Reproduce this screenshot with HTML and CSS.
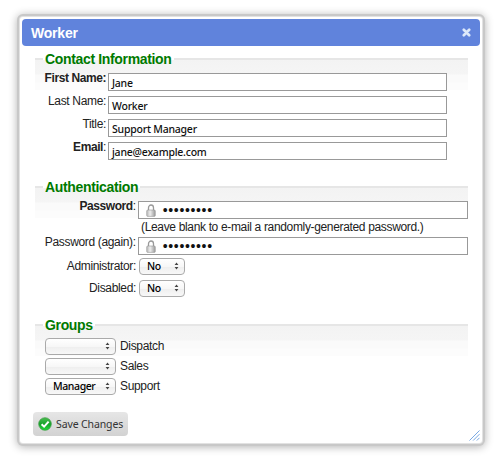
FILE: index.html
```html
<!DOCTYPE html>
<html lang="en">
<head>
<meta charset="utf-8">
<title>Worker</title>
<link rel="stylesheet" href="styles.css">
</head>
<body>
<svg class="defs" width="0" height="0" aria-hidden="true">
  <defs>
    <linearGradient id="metal" x1="0" x2="1" y1="0" y2="0"><stop offset="0" stop-color="#b5b5b5"/><stop offset=".4" stop-color="#eee"/><stop offset="1" stop-color="#999"/></linearGradient>
    <linearGradient id="green" x1="0" x2="0" y1="0" y2="1"><stop offset="0" stop-color="#4bbd50"/><stop offset=".5" stop-color="#16a32a"/><stop offset="1" stop-color="#20d838"/></linearGradient>
    <symbol id="lock" viewBox="0 0 10 13"><path d="M2.5 6.5V3.8a2.5 2.8 0 0 1 5 0v2.7" fill="none" stroke="#999" stroke-width="1.3"/><rect x=".7" y="6" width="8.6" height="6.4" rx="1" fill="url(#metal)" stroke="#999" stroke-width=".6"/></symbol>
    <symbol id="arrows" viewBox="0 0 5 8"><path d="M2.5 .4 4.4 3H.6zM2.5 7.6 .6 5h3.8z" fill="#444"/></symbol>
  </defs>
</svg>
<main class="dialog">
  <header class="titlebar">
    <h1>Worker</h1>
    <svg class="close" viewBox="0 0 9 9"><path d="M1.8 1.8l5.4 5.4M7.2 1.8L1.8 7.2" stroke="#dce8fa" stroke-width="2.7" stroke-linecap="round"/></svg>
  </header>
  <fieldset class="contact">
    <legend>Contact Information</legend>
    <div class="row"><label><b>First Name:</b></label><div class="input">Jane</div></div>
    <div class="row"><label>Last Name:</label><div class="input">Worker</div></div>
    <div class="row"><label>Title:</label><div class="input">Support Manager</div></div>
    <div class="row"><label><b>Email</b>:</label><div class="input">jane@example.com</div></div>
  </fieldset>
  <fieldset class="auth">
    <legend>Authentication</legend>
    <div class="row"><label><b>Password</b>:</label><div class="input secret"><svg class="lock"><use href="#lock"/></svg><span class="dots">•••••••••</span></div></div>
    <p class="hint">(Leave blank to e-mail a randomly-generated password.)</p>
    <div class="row"><label>Password (again):</label><div class="input secret"><svg class="lock"><use href="#lock"/></svg><span class="dots">•••••••••</span></div></div>
    <div class="row choice"><label>Administrator:</label><div class="select"><span>No</span><svg class="arrows"><use href="#arrows"/></svg></div></div>
    <div class="row choice"><label>Disabled:</label><div class="select"><span>No</span><svg class="arrows"><use href="#arrows"/></svg></div></div>
  </fieldset>
  <fieldset class="groups">
    <legend>Groups</legend>
    <div class="group"><div class="select"><span></span><svg class="arrows"><use href="#arrows"/></svg></div><label>Dispatch</label></div>
    <div class="group"><div class="select"><span></span><svg class="arrows"><use href="#arrows"/></svg></div><label>Sales</label></div>
    <div class="group"><div class="select"><span>Manager</span><svg class="arrows"><use href="#arrows"/></svg></div><label>Support</label></div>
  </fieldset>
  <button class="save" type="button">
    <svg class="check" viewBox="0 0 14 14"><circle cx="7" cy="7" r="6.3" fill="url(#green)" stroke="#3c9a42" stroke-width=".7"/><path d="M3.6 7.2l2.5 2.4 4.5-5" fill="none" stroke="#fff" stroke-width="2"/></svg>
    <span>Save Changes</span>
  </button>
  <svg class="resize" viewBox="0 0 12 12"><path d="M.5 11.5l11-11M4.5 11.5l7-7M8.5 11.5l3-3" stroke="#6ba0e0" stroke-width="1"/></svg>
</main>
</body>
</html>
```

FILE: styles.css
```css
* { box-sizing: border-box; }
body {
  margin: 0;
  width: 500px;
  height: 461px;
  overflow: hidden;
  background: #fff;
  font: 12px/14px "Liberation Sans", Arial, sans-serif;
  letter-spacing: -.34px;
  color: #222;
  display: flow-root;
}
.defs { position: absolute; }
.dialog {
  position: relative;
  margin: 17px 0 0 20px;
  width: 462px;
  height: 426px;
  padding: 2px;
  background: #fff;
  border-radius: 3px;
  box-shadow: 0 0 0 1px #e2e2e2, 0 0 0 3px #c8c8c8, 0 1px 8px 3px rgba(0, 0, 0, .3);
}
.titlebar {
  display: flex;
  align-items: center;
  justify-content: space-between;
  height: 27px;
  padding: 0 9px;
  border-radius: 4px;
  background: #6083dc;
}
h1 { margin: 1px 0 0; font-size: 14px; line-height: 18px; letter-spacing: -.2px; color: #fff; }
.close { width: 9px; height: 9px; }
fieldset {
  margin: 0 0 0 13px;
  padding: 0;
  width: 433px;
  min-width: 0;
  border: 0;
  border-top: 2px solid #e6e6e6;
  background: linear-gradient(#f3f3f3, #f5f5f5 14px, #fafafa 15px, #fafafa 22px, #fcfcfc 23px, #fcfcfc 30px, #fff 30px) no-repeat 0 0 / 100% 32px;
}
legend {
  margin-left: 8px;
  padding: 0 2px;
  height: 16px;
  font-size: 14px;
  font-weight: bold;
  line-height: 16px;
  color: #007a00;
}
.contact { height: 128px; margin-top: 5px; }
.auth { height: 138px; }
.groups { height: 95px; }
.row { display: flex; height: 23px; }
.contact .row:first-of-type { margin-top: 4px; }
.row label { width: 71px; text-align: right; white-space: nowrap; }
.row b { letter-spacing: -.42px; }
.input {
  display: flex;
  align-items: center;
  width: 339px;
  height: 18px;
  margin: 2px 0 0 2px;
  padding: 1px 3px 0;
  background: #fff;
  border: 1px solid #999;
  color: #111;
  font: 500 10.5px/14px "Noto Sans", sans-serif;
  letter-spacing: -.22px;
}
.auth .row:first-of-type { margin-top: 4px; }
.auth .row { height: 20px; }
.auth .row label { width: 101px; }
.auth .input { width: 331px; }
.secret { padding: 0 7px; }
.lock { width: 10px; height: 13px; margin-right: 7px; }
.dots { font: 14px/14px "Liberation Sans", sans-serif; letter-spacing: .65px; }
.hint { height: 16px; margin: 0 0 0 106px; line-height: 16px; white-space: nowrap; }
.auth .choice { height: 22px; align-items: center; }
.select {
  display: flex;
  align-items: center;
  justify-content: space-between;
  height: 17px;
  border: 1px solid #aaa;
  border-radius: 4px;
  background: linear-gradient(#fff, #f7f7f7 50%, #eee 51%, #f8f8f8);
  padding: 0 5px 0 7px;
  font: 500 10.5px/14px "Noto Sans", sans-serif;
  letter-spacing: -.4px;
  color: #000;
}
.arrows { width: 5px; height: 8px; }
.choice .select { width: 46px; margin-left: 3px; }
.group { display: flex; align-items: center; height: 20px; margin-left: 10px; }
.group:first-of-type { margin-top: 3px; }
.group .select { width: 71px; margin-right: 4px; }
.save {
  display: flex;
  align-items: center;
  gap: 4px;
  width: 95px;
  height: 24px;
  margin: 0 0 0 11px;
  padding: 0 5px;
  border: 0;
  border-radius: 4px;
  background: linear-gradient(#e6e6e6, #d2d2d2);
  color: #333;
  font: 10.5px/14px "Noto Sans", sans-serif;
  letter-spacing: -.12px;
  white-space: nowrap;
}
.check { width: 14px; height: 14px; flex: none; }
.save span { margin-top: -1px; }
.resize { position: absolute; right: 2px; bottom: 2px; width: 11px; height: 11px; }
```
